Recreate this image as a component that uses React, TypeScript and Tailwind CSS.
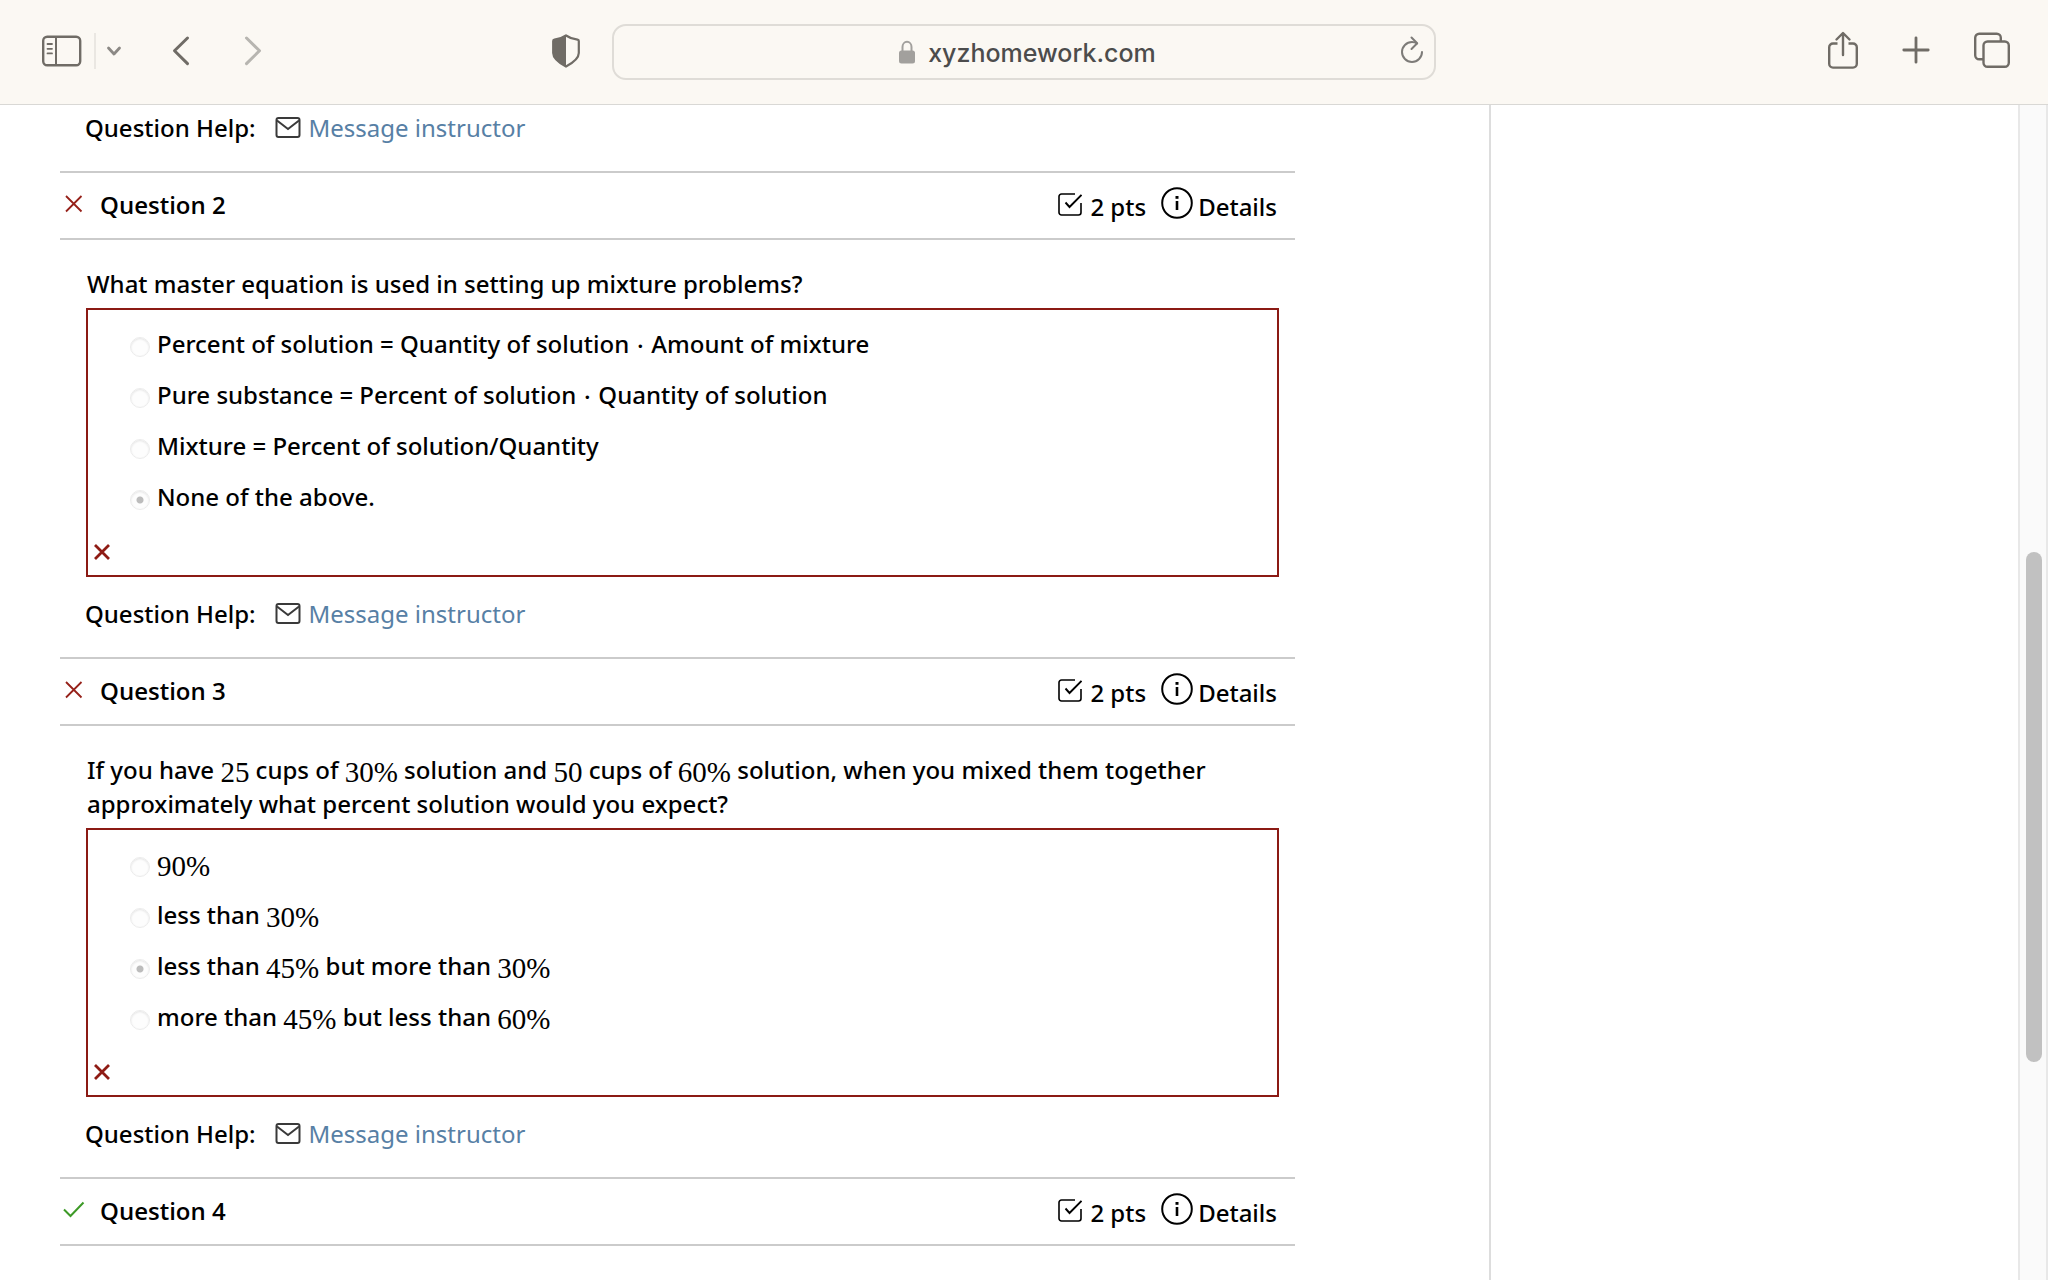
import { ReactNode } from 'react';

type Question = {
  number: number;
  prompt: ReactNode;
  options: ReactNode[];
  selected: number;
};

function M({ children }: { children: ReactNode }) {
  return (
    <span className="align-[-3px] font-['Liberation_Serif',serif] text-[29px] leading-none font-normal">
      {children}
    </span>
  );
}

const questions: Question[] = [
  {
    number: 2,
    prompt: 'What master equation is used in setting up mixture problems?',
    options: [
      <>
        Percent of solution = Quantity of solution <M>·</M> Amount of mixture
      </>,
      <>
        Pure substance = Percent of solution <M>·</M> Quantity of solution
      </>,
      'Mixture = Percent of solution/Quantity',
      'None of the above.',
    ],
    selected: 3,
  },
  {
    number: 3,
    prompt: (
      <>
        If you have <M>25</M> cups of <M>30%</M> solution and <M>50</M> cups of <M>60%</M> solution, when
        you mixed them together approximately what percent solution would you expect?
      </>
    ),
    options: [
      <M>90%</M>,
      <>
        less than <M>30%</M>
      </>,
      <>
        less than <M>45%</M> but more than <M>30%</M>
      </>,
      <>
        more than <M>45%</M> but less than <M>60%</M>
      </>,
    ],
    selected: 2,
  },
];

function Toolbar() {
  return (
    <header className="grid h-[105px] shrink-0 grid-cols-[1fr_minmax(0,824px)_1fr] items-center border-b border-[#d9d8d5] bg-[#fbf8f3] text-[#706c66]">
      <div className="flex items-center pr-8 pb-0.5 pl-[42px]">
        <button type="button" aria-label="Show sidebar">
          <svg className="h-8 w-10" viewBox="0 0 40 32" fill="none" stroke="currentColor" strokeWidth="2.4">
            <rect x="1.2" y="1.7" width="37" height="28.6" rx="4" />
            <path d="M14 2v28" strokeWidth="2" />
            <path d="M5.5 9h4.5M5.5 13.8h4.5M5.5 18.4h4.5" strokeWidth="1.8" strokeLinecap="round" />
          </svg>
        </button>
        <span className="ml-3 h-9 w-0.5 bg-[#eae7e2]" />
        <button type="button" aria-label="Tab groups" className="ml-2.5">
          <svg className="h-4 w-4" viewBox="0 0 16 16" fill="none" stroke="#8c8985" strokeWidth="2.8" strokeLinecap="round" strokeLinejoin="round">
            <path d="M2.5 5 8 11l5.5-6" />
          </svg>
        </button>
        <button type="button" aria-label="Back" className="ml-[49px]">
          <svg className="h-8 w-5" viewBox="0 0 20 32" fill="none" stroke="currentColor" strokeWidth="3" strokeLinecap="round" strokeLinejoin="round">
            <path d="M16.5 3 3.5 15.8l13 12.8" />
          </svg>
        </button>
        <button type="button" aria-label="Forward" className="ml-[52px]">
          <svg className="h-8 w-5" viewBox="0 0 20 32" fill="none" stroke="#b7b5b0" strokeWidth="3" strokeLinecap="round" strokeLinejoin="round">
            <path d="M3.5 3l13 12.8-13 12.8" />
          </svg>
        </button>
        <button type="button" aria-label="Privacy report" className="ml-auto">
          <svg className="h-[34px] w-7" viewBox="0 0 28 34" fill="none">
            <path d="M14 1.5C10.5 4 6.5 5.2 2.5 5.7c-.8.1-1.3.6-1.3 1.4V19c0 6.5 7.3 10.6 12.8 13.5C19.5 29.6 26.8 25.5 26.8 19V7.1c0-.8-.5-1.3-1.3-1.4C21.5 5.2 17.5 4 14 1.5Z" stroke="currentColor" strokeWidth="2.2" />
            <path d="M14 1.5C10.5 4 6.5 5.2 2.5 5.7c-.8.1-1.3.6-1.3 1.4V19c0 6.5 7.3 10.6 12.8 13.5Z" fill="currentColor" />
          </svg>
        </button>
      </div>

      <div className="flex h-14 items-center rounded-[14px] border-2 border-[#dfdcd7] pr-2.5">
        <div className="ml-10 flex flex-1 items-center justify-center gap-3">
          <svg className="h-6 w-[18px]" viewBox="0 0 18 24">
            <path d="M4.5 12V7a4.5 5.2 0 0 1 9 0v5" fill="none" stroke="#a2a09d" strokeWidth="2" />
            <rect x="1" y="10.5" width="16" height="13" rx="2.5" fill="#a2a09d" />
          </svg>
          <input
            aria-label="Address"
            defaultValue="xyzhomework.com"
            className="field-sizing-content h-10 bg-transparent pt-0.5 font-['Inter',sans-serif] text-[25px] text-[#4c4c4c] outline-none"
          />
        </div>
        <button type="button" aria-label="Reload" className="pb-1">
          <svg className="h-7 w-6" viewBox="0 0 24 28" fill="none" stroke="#7d7b78" strokeWidth="2" strokeLinecap="round" strokeLinejoin="round">
            <path d="M17 7.5C15.5 6.5 14 6 12 6a10 10 0 1 0 10 10" />
            <path d="M11.5 1.5 17.2 7.3 11.5 13" />
          </svg>
        </button>
      </div>

      <div className="flex items-center justify-end pr-[38px] pb-1">
        <button type="button" aria-label="Share">
          <svg className="h-[38px] w-[30px]" viewBox="0 0 30 38" fill="none" stroke="currentColor" strokeWidth="2.4" strokeLinecap="round" strokeLinejoin="round">
            <path d="M9.5 12.5H5A3.8 3.8 0 0 0 1.2 16.3v16.5A3.8 3.8 0 0 0 5 36.6h20a3.8 3.8 0 0 0 3.8-3.8V16.3A3.8 3.8 0 0 0 25 12.5h-4.5" strokeLinecap="butt" />
            <path d="M15 24V2.5M8.5 8.5 15 2l6.5 6.5" />
          </svg>
        </button>
        <button type="button" aria-label="New tab" className="ml-11">
          <svg className="h-7 w-7" viewBox="0 0 28 28" stroke="currentColor" strokeWidth="2.8" strokeLinecap="round">
            <path d="M14 1.8v24.4M1.8 14h24.4" />
          </svg>
        </button>
        <button type="button" aria-label="Tab overview" className="ml-11">
          <svg className="h-9 w-9" viewBox="0 0 36 36" fill="none" stroke="currentColor" strokeWidth="2.4">
            <path d="M9.5 27.3H5.2a4 4 0 0 1-4-4V5.7a4 4 0 0 1 4-4h17.6a4 4 0 0 1 4 4v4" />
            <rect x="9.5" y="9.5" width="25.3" height="25.3" rx="4" />
          </svg>
        </button>
      </div>
    </header>
  );
}

function QuestionHeader({ number, correct = false }: { number: number; correct?: boolean }) {
  return (
    <div className="flex h-[69px] items-center border-y-2 border-[#cbcbcb] pb-[3px]">
      {correct ? (
        <svg className="ml-[3px] h-6 w-[22px]" viewBox="0 0 22 24" fill="none" stroke="#3d9a27" strokeWidth="2">
          <path d="M1 11.5 7.5 18 20.5 4.5" />
        </svg>
      ) : (
        <svg className="ml-[3px] h-6 w-[22px]" viewBox="0 0 22 24" fill="none" stroke="#96211a" strokeWidth="1.8">
          <path d="M3 4l15.5 15.5M18.5 4 3 19.5" />
        </svg>
      )}
      <h2 className="mt-0.5 ml-[15px] font-['Open_Sans',sans-serif] font-semibold">Question {number}</h2>
      <div className="mr-[18px] ml-auto flex items-center">
        <svg className="h-6 w-6" viewBox="0 0 24 24" fill="none" stroke="black" strokeWidth="1.6">
          <path d="M17 2H3.5A2.5 2.5 0 0 0 1 4.5v16A2.5 2.5 0 0 0 3.5 23h17a2.5 2.5 0 0 0 2.5-2.5V11" />
          <path d="M7.5 10.5 11.5 15 23.5 2.8" strokeWidth="1.9" />
        </svg>
        <span className="mt-1.5 ml-2">2 pts</span>
        <button type="button" className="ml-[15px] flex items-center gap-[5px]">
          <svg className="mb-0.5 h-8 w-8" viewBox="0 0 32 32" fill="none" stroke="black" strokeWidth="2">
            <circle cx="16" cy="16" r="14.8" />
            <path d="M16 14v9" strokeWidth="2.6" />
            <path d="M16 9v2.8" strokeWidth="3" />
          </svg>
          <span className="mt-1.5">Details</span>
        </button>
      </div>
    </div>
  );
}

function QuestionHelp() {
  return (
    <p className="mb-[26px] ml-[25px] flex items-center">
      Question Help:
      <svg className="mr-2 ml-[19px] h-6 w-[26px]" viewBox="0 0 26 24" fill="none" stroke="#3a3a3a" strokeWidth="2">
        <rect x="1.5" y="2" width="23" height="19" rx="2" />
        <path d="M2 4.5 13 13 24 4.5" />
      </svg>
      <a href="#message" className="font-normal text-[#5780a5]">
        Message instructor
      </a>
    </p>
  );
}

function QuestionBody({ number, prompt, options, selected }: Question) {
  return (
    <>
      <p className="mt-[27px] ml-[27px] pr-4">{prompt}</p>
      <fieldset className="mt-[7px] mr-4 mb-5 ml-[26px] border-2 border-[#8b1a14] pt-[17px] pb-1.5">
        <ul className="mb-[21px] flex flex-col gap-[17px]">
          {options.map((option, i) => (
            <li key={i} className="flex pl-[42px]">
              <input
                id={`q${number}-${i}`}
                type="radio"
                name={`q${number}`}
                defaultChecked={i === selected}
                disabled
                className="mt-2.5 mr-[7px] h-5 w-5 shrink-0 appearance-none rounded-full border border-[#ececec] bg-[#fdfdfd] shadow-[inset_0_1px_2px_#e4e4e4] checked:bg-[radial-gradient(circle,#bcbcbc_3px,#fdfdfd_4px)]"
              />
              <label htmlFor={`q${number}-${i}`}>{option}</label>
            </li>
          ))}
        </ul>
        <div className="flex h-[34px] items-center pl-1.5">
          <svg className="h-4 w-4" viewBox="0 0 16 16" stroke="#8f1b14" strokeWidth="2.8">
            <path d="M1 1l14 14M15 1 1 15" />
          </svg>
        </div>
      </fieldset>
      <QuestionHelp />
    </>
  );
}

export default function App() {
  return (
    <div className="flex h-screen flex-col overflow-hidden bg-white font-['Noto_Sans',sans-serif] text-[24px] leading-[34px] font-medium text-black">
      <Toolbar />
      <div className="flex min-h-0 flex-1">
        <main className="w-full max-w-[1491px] overflow-hidden border-r-2 border-[#dddddd] pt-1.5 pr-[194px] pl-[60px]">
          <QuestionHelp />
          {questions.map((q) => (
            <section key={q.number}>
              <QuestionHeader number={q.number} />
              <QuestionBody {...q} />
            </section>
          ))}
          <QuestionHeader number={4} correct />
        </main>
        <div className="ml-auto w-[30px] shrink-0 border-x-2 border-[#e8e8e8] bg-[#fafafa]">
          <div className="mt-[447px] ml-1.5 h-[510px] w-4 rounded-full bg-[#c1c1c1]" />
        </div>
      </div>
    </div>
  );
}
